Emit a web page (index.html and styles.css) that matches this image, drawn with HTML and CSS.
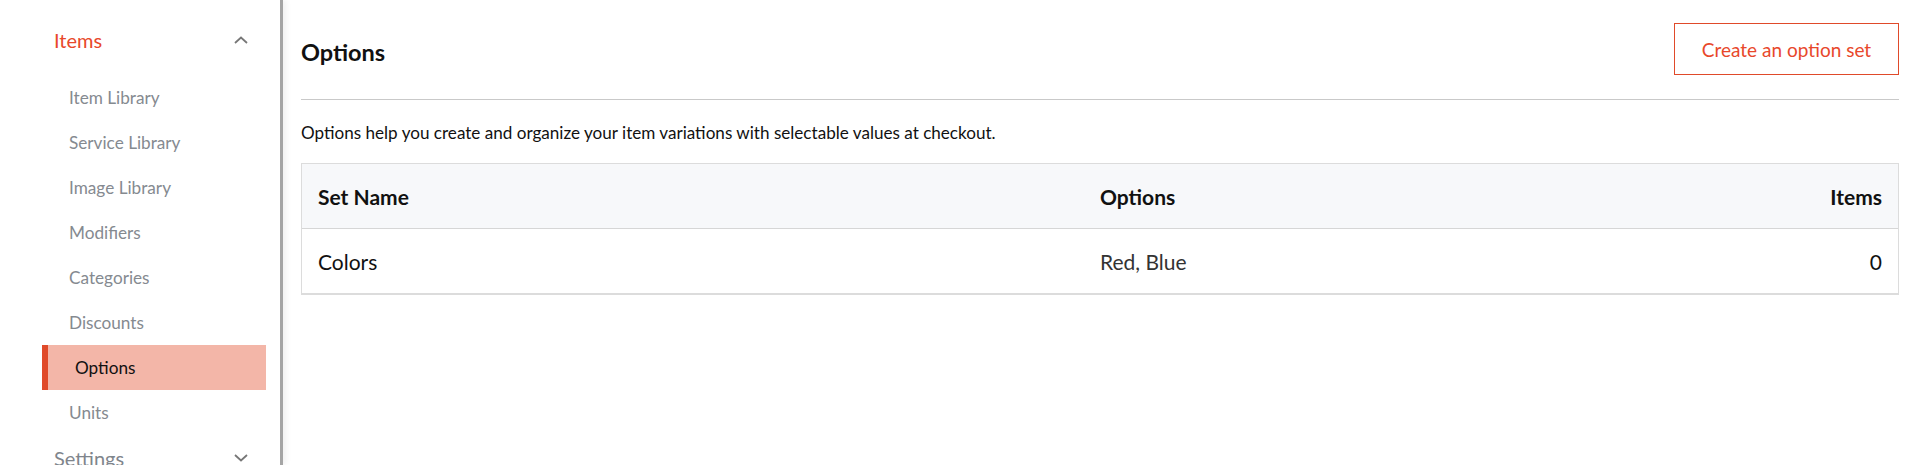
FILE: index.html
```html
<!DOCTYPE html>
<html lang="en">
<head>
<meta charset="utf-8">
<title>Options</title>
<link rel="stylesheet" href="styles.css">
</head>
<body>
<div class="app">
  <aside class="sidebar">
    <div class="group-head group-head--open">
      <span>Items</span>
      <svg class="chev" width="14" height="8" viewBox="0 0 14 8"><path d="M1 7 L7 1.5 L13 7" fill="none" stroke="#777" stroke-width="1.8"/></svg>
    </div>
    <ul class="sub">
      <li>Item Library</li>
      <li>Service Library</li>
      <li>Image Library</li>
      <li>Modifiers</li>
      <li>Categories</li>
      <li>Discounts</li>
      <li class="active">Options</li>
      <li>Units</li>
    </ul>
    <div class="group-head">
      <span>Settings</span>
      <svg class="chev" width="14" height="8" viewBox="0 0 14 8"><path d="M1 1 L7 6.5 L13 1" fill="none" stroke="#777" stroke-width="1.8"/></svg>
    </div>
  </aside>
  <main class="main">
    <header class="page-head">
      <h1>Options</h1>
      <button class="btn-outline">Create an option set</button>
    </header>
    <p class="desc">Options help you create and organize your item variations with selectable values at checkout.</p>
    <div class="table">
      <div class="row head">
        <div class="cell">Set Name</div>
        <div class="cell">Options</div>
        <div class="cell num">Items</div>
      </div>
      <div class="row">
        <div class="cell">Colors</div>
        <div class="cell muted">Red, Blue</div>
        <div class="cell num">0</div>
      </div>
    </div>
  </main>
</div>
</body>
</html>
```
FILE: styles.css
```css
* { box-sizing: border-box; }
html, body { margin: 0; padding: 0; }
body {
  font-family: Lato, "Open Sans", sans-serif;
  background: #fff;
  color: #111;
  height: 465px;
  overflow: hidden;
}
.app { display: flex; height: 465px; }

.sidebar {
  width: 283px;
  flex: none;
  border-right: 3px solid #a5a5a5;
  box-shadow: 3px 0 6px rgba(0,0,0,0.06);
  padding-top: 18px;
  overflow: hidden;
}
.group-head {
  height: 44px;
  display: flex;
  align-items: center;
  justify-content: space-between;
  padding: 0 32px 0 54px;
  font-size: 20px;
  color: #7f858c;
}
.group-head--open { color: #e8482b; }
.chev { display: block; }
.sub {
  list-style: none;
  margin: 13px 0 1px 42px;
  padding: 0;
  width: 224px;
}
.sub li {
  height: 45px;
  display: flex;
  align-items: center;
  padding-left: 27px;
  font-size: 17.2px;
  color: #858a90;
}
.sub li.active {
  background: #f3b6a8;
  border-left: 6px solid #e04a2a;
  color: #111;
}

.main {
  flex: 1;
  padding: 0 17px 0 18px;
}
.page-head {
  display: flex;
  align-items: center;
  justify-content: space-between;
  padding: 23px 0 24px;
  border-bottom: 1px solid #c9c9c9;
}
.page-head h1 {
  margin: 0;
  padding-top: 5px;
  font-size: 23.5px;
  font-weight: 700;
  color: #111;
}
.btn-outline {
  height: 52px;
  width: 225px;
  background: #fff;
  border: 1.5px solid #e04a2a;
  color: #e8482b;
  font-family: inherit;
  font-size: 19px;
  padding: 0;
}
.desc {
  margin: 23px 0 20px;
  font-size: 17.1px;
  line-height: 20px;
  color: #111;
}
.table {
  border: 1px solid #dcdcdc;
  border-bottom-width: 2px;
}
.row {
  display: grid;
  grid-template-columns: 782px 1fr 200px;
  height: 64px;
  align-items: center;
  font-size: 21px;
  color: #111;
}
.row.head {
  background: #f7f8fa;
  font-weight: 700;
  height: 65px;
  border-bottom: 1px solid #d6d6d6;
}
.cell { padding: 0 16px; }
.cell.num { text-align: right; }
.cell.muted { color: #333; }
```
